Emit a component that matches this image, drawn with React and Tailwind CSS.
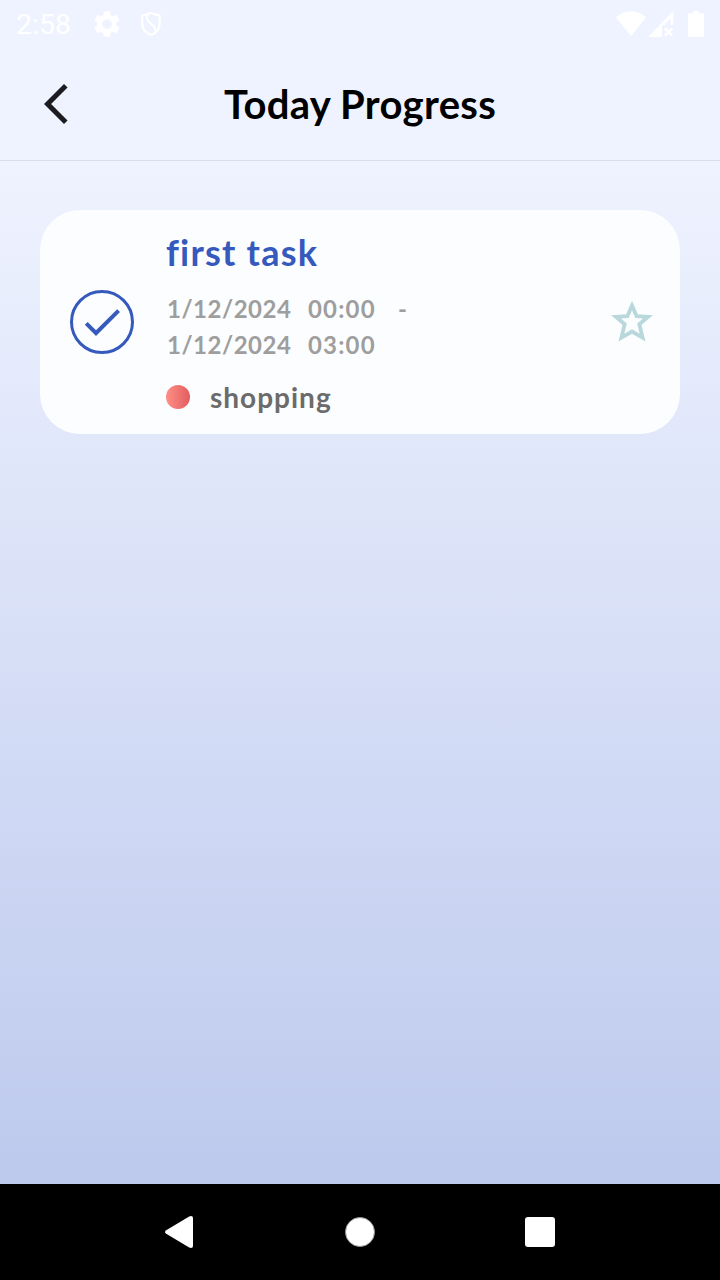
import { MdArrowBackIosNew, MdCheck, MdSettings } from "react-icons/md";

function StatusBar() {
  return (
    <div className="flex h-12 items-center justify-between pl-4 pr-4 text-white">
      <div className="flex items-center">
        <span className="w-[75px] font-['Roboto',sans-serif] text-[28.5px] leading-[48px] pt-[2px]">2:58</span>
        <MdSettings className="size-8" />
        <svg className="ml-[17px] h-[26px] w-[22px]" viewBox="0 0 22 26" fill="none" stroke="currentColor" strokeWidth="2.2">
          <path d="M11 2 L19.6 4.6 V12.5 C19.6 18.5 16.5 22 11 24 C5.5 22 2.2 18.5 2.2 12.5 V4.6 Z" strokeLinejoin="round" />
          <path d="M7 3.8 C6.5 8.5 8 10.5 11.5 13.2 C14.8 15.7 15.8 17.5 15.3 20.5" />
        </svg>
      </div>
      <div className="flex items-center">
        <svg className="h-[26px] w-[30px]" viewBox="0 0 30 26" fill="currentColor">
          <path d="M0 6.2 C8.5 -1.8 21.5 -1.8 30 6.2 L15 25.2 Z" />
        </svg>
        <svg className="ml-[2px] h-[26px] w-[26px]" viewBox="0 0 26 26" fill="currentColor">
          <path d="M25.3 0 V14 H22.5 V7 L17.5 12.2 V14 H14 V26 H0 Z" />
          <path d="M17 17.3 L24.3 24.6 M24.3 17.3 L17 24.6" stroke="currentColor" strokeWidth="2.6" />
        </svg>
        <svg className="ml-[14px] h-[26px] w-4" viewBox="0 0 16 26" fill="currentColor">
          <path d="M5 0 H11 V2.3 H14.5 Q16 2.3 16 4 V24.3 Q16 26 14.5 26 H1.5 Q0 26 0 24.3 V4 Q0 2.3 1.5 2.3 H5 Z" />
        </svg>
      </div>
    </div>
  );
}

function Header() {
  return (
    <header className="grid h-[113px] grid-cols-[112px_1fr_112px] items-center border-b border-[#d9deea]">
      <button className="pl-8" aria-label="Back">
        <MdArrowBackIosNew className="size-12 text-[#1d1b20]" />
      </button>
      <h1 className="text-center text-[40px] font-bold leading-[48px] tracking-[0.3px] text-black">Today Progress</h1>
    </header>
  );
}

function TaskCard() {
  return (
    <article className="flex h-56 items-center rounded-[40px] bg-[#fcfdff] pl-[30px] pr-[23px]">
      <div className="flex size-16 items-center justify-center rounded-full border-[3px] border-[#3559bc] text-[#3559bc]">
        <MdCheck className="size-12 shrink-0" />
      </div>
      <div className="ml-8 flex-1 font-bold">
        <h2 className="text-[36px] leading-[44px] tracking-[1.2px] text-[#3559bc]">first task</h2>
        <div className="mt-[17px] pl-px text-[24px] leading-[36px] tracking-[1.2px] text-[#9e9e9e]">
          <p className="flex"><span className="w-[141px] tracking-[0.5px]">1/12/2024</span><span className="w-[90px]">00:00</span><span>-</span></p>
          <p className="flex"><span className="w-[141px] tracking-[0.5px]">1/12/2024</span><span>03:00</span></p>
        </div>
        <div className="mt-[17px] flex items-center gap-5">
          <span className="size-6 rounded-full bg-linear-to-r from-[#ff8f86] to-[#e25c60]" />
          <span className="text-[28px] leading-[34px] tracking-[1px] text-[#6b6b6b]">shopping</span>
        </div>
      </div>
      <svg className="size-[50px] text-[#b9d8dc]" viewBox="0 0 50 50" fill="none" stroke="currentColor" strokeWidth="3.8">
        <path d="M25 8.5 L29.6 19.2 L41 19.8 L32.3 27.2 L35.6 40.6 L25 34.5 L14.4 40.6 L17.7 27.2 L9 19.8 L20.4 19.2 Z" strokeMiterlimit="8" />
      </svg>
    </article>
  );
}

function NavigationBar() {
  return (
    <nav className="flex h-24 items-center justify-center gap-[150px] bg-black text-white">
      <svg className="h-8 w-[30px]" viewBox="2 0 30 32" fill="currentColor">
        <path d="M3.2 14.2 L26.2 .4 Q30 -.7 30 2 V30 Q30 32.7 26.2 31.6 L3.2 17.8 Q.8 16 3.2 14.2 Z" />
      </svg>
      <span className="size-[30px] rounded-full border border-[#999] bg-white" />
      <span className="size-[30px] rounded-[3px] bg-white" />
    </nav>
  );
}

export default function App() {
  return (
    <div className="flex h-[1280px] w-[720px] flex-col bg-[#eff3ff] font-['Lato',sans-serif]">
      <StatusBar />
      <Header />
      <main className="flex-1 bg-linear-to-b from-[#eff3ff] to-[#bdc9ed] px-10 pt-[49px]">
        <TaskCard />
      </main>
      <NavigationBar />
    </div>
  );
}
